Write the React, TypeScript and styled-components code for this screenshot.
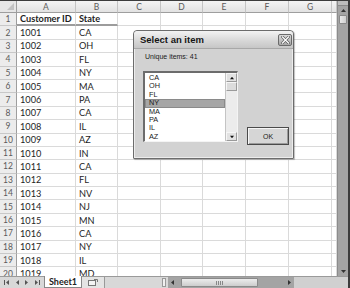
import React from "react";
import styled, { createGlobalStyle, css } from "styled-components";

const Global = createGlobalStyle`
  html, body { margin: 0; padding: 0; background: #fff; overflow: hidden; }
  #root { width: 350px; height: 288px; }
`;

const Window = styled.div`
  position: relative;
  width: 350px;
  height: 288px;
  box-sizing: border-box;
  border-top: 1px solid #3c3c3c;
  border-right: 2px solid #3c3c3c;
  display: flex;
  flex-direction: column;
  overflow: hidden;
  background: #fff;
`;

const Main = styled.div`
  flex: 1;
  display: flex;
  min-height: 0;
`;

const Sheet = styled.div`
  flex: 1;
  display: grid;
  grid-template-columns: 17px 59px 42px 43px 42px 43px 43px 43px 1fr;
  grid-template-rows: 12px repeat(20, 13.4px);
  overflow: hidden;
  font-family: Lato, "Liberation Sans", sans-serif;
`;

type CellKind = "corner" | "colhead" | "rowhead" | "cell";

const Cell = styled.div<{ $kind: CellKind; $bold?: boolean; $heading?: boolean }>`
  box-sizing: border-box;
  display: flex;
  align-items: center;
  overflow: hidden;
  white-space: nowrap;
  border-right: 1px solid #dadada;
  border-bottom: 1px solid #dadada;
  font-size: 9.2px;
  color: #1e1e1e;
  padding-left: 3px;
  ${(p) => p.$bold && css`font-weight: 700;`}
  ${(p) =>
    p.$heading &&
    css`
      border-bottom: 2px solid #9c9c9c;
    `}
  ${(p) =>
    p.$kind === "colhead" &&
    css`
      justify-content: center;
      padding-left: 0;
      background: linear-gradient(#f4f4f4, #e2e2e2);
      border-right: 1px solid #c4c4c4;
      border-bottom: 1px solid #9e9e9e;
      color: #5a5a5a;
      font-size: 8.5px;
    `}
  ${(p) =>
    p.$kind === "rowhead" &&
    css`
      justify-content: center;
      padding-left: 0;
      background: #ececec;
      border-right: 1px solid #9e9e9e;
      border-bottom: 1px solid #c8c8c8;
      color: #5a5a5a;
      font-size: 8.5px;
    `}
  ${(p) =>
    p.$kind === "corner" &&
    css`
      padding-left: 0;
      background: #e6e6e6;
      border-right: 1px solid #9e9e9e;
      border-bottom: 1px solid #9e9e9e;
      position: relative;
    `}
`;

const CornerMark = styled.span`
  position: absolute;
  right: 2px;
  bottom: 2px;
  width: 0;
  height: 0;
  border-left: 7px solid transparent;
  border-bottom: 7px solid #c2c2c2;
`;

const VScroll = styled.div`
  width: 10px;
  display: flex;
  flex-direction: column;
  background: #a4a4a4;
  border-left: 1px solid #8c8c8c;
`;

const VSplit = styled.div`
  height: 4px;
  background: #bdbdbd;
  border-bottom: 1px solid #8a8a8a;
`;

const ArrowBtn = styled.div`
  height: 9px;
  display: flex;
  align-items: center;
  justify-content: center;
`;

const VThumb = styled.div`
  height: 7px;
  margin: 0 1px;
  background: linear-gradient(90deg, #e9e9e9, #cfcfcf);
  border: 1px solid #8a8a8a;
  border-radius: 1px;
`;

const Fill = styled.div`
  flex: 1;
`;

const BottomBar = styled.div`
  height: 11px;
  display: flex;
  align-items: stretch;
  background: #d8d8d8;
  border-top: 1px solid #9a9a9a;
  font-family: Lato, "Liberation Sans", sans-serif;
`;

const NavArrows = styled.div`
  width: 44px;
  display: flex;
  align-items: center;
  justify-content: space-around;
  padding: 0 2px;
  box-sizing: border-box;
`;

const SheetTab = styled.div`
  width: 36px;
  display: flex;
  align-items: center;
  justify-content: center;
  background: #fff;
  font-weight: 700;
  font-size: 9px;
  line-height: 1;
  color: #222;
  border-left: 1px solid #888;
  border-right: 1px solid #888;
  border-bottom: 1px solid #888;
  margin-top: -1px;
`;

const InsertTab = styled.div`
  width: 22px;
  display: flex;
  align-items: center;
  justify-content: center;
  background: #e4e4e4;
  border-right: 1px solid #999;
`;

const HSplit = styled.div`
  width: 2px;
  margin: 1px 2px;
  background: #f0f0f0;
  border: 1px solid #999;
`;

const HScroll = styled.div`
  width: 126px;
  display: flex;
  align-items: stretch;
  background: #a4a4a4;
`;

const HArrow = styled.div`
  width: 9px;
  display: flex;
  align-items: center;
  justify-content: center;
`;

const HThumb = styled.div`
  width: 75px;
  margin: 1px 0 1px 4px;
  background: linear-gradient(#ececec, #cdcdcd);
  border: 1px solid #8a8a8a;
  border-radius: 1px;
  display: flex;
  align-items: center;
  justify-content: center;
  gap: 1px;
`;

const Grip = styled.span`
  width: 1px;
  height: 4px;
  background: #888;
`;

const Corner = styled.div`
  flex: 1;
  background: #d0d0d0;
`;

/* Dialog */

const Dialog = styled.div`
  position: absolute;
  left: 133px;
  top: 29px;
  width: 161px;
  height: 129px;
  box-sizing: border-box;
  border: 1px solid #6c6c6c;
  border-radius: 4px 4px 1px 1px;
  background: #d2d2d2;
  box-shadow: inset 0 0 0 1px #ececec, 1px 1px 1px rgba(0, 0, 0, 0.25);
  display: flex;
  flex-direction: column;
  font-family: "Liberation Sans", Arial, sans-serif;
  overflow: hidden;
`;

const TitleBar = styled.div`
  height: 17px;
  flex: none;
  display: flex;
  align-items: center;
  justify-content: space-between;
  padding: 0 1px 0 6px;
  background: linear-gradient(#f3f3f3, #d6d6d6 60%, #c6c6c6);
  border-bottom: 1px solid #a8a8a8;
  border-radius: 3px 3px 0 0;
`;

const Title = styled.span`
  font-weight: 700;
  font-size: 9.5px;
  color: #151515;
`;

const CloseBtn = styled.div`
  width: 14px;
  height: 12px;
  box-sizing: border-box;
  border: 1px solid #6a6a6a;
  border-radius: 2px;
  background: linear-gradient(#d8d8d8, #a8a8a8);
  display: flex;
  align-items: center;
  justify-content: center;
`;

const DialogBody = styled.div`
  display: grid;
  grid-template-columns: 95px 42px;
  grid-template-rows: 22px 71px;
  align-content: start;
  column-gap: 9px;
  padding: 0 0 0 9px;
  align-items: start;
`;

const Label = styled.div`
  grid-column: 1 / span 2;
  font-size: 7px;
  color: #1a1a1a;
  padding: 4px 0 0 2px;
`;

const ListBox = styled.div`
  height: 71px;
  box-sizing: border-box;
  display: flex;
  background: #fff;
  border-top: 2px solid #6c6c6c;
  border-left: 2px solid #6c6c6c;
  border-right: 1px solid #f4f4f4;
  border-bottom: 1px solid #f4f4f4;
`;

const Items = styled.div`
  flex: 1;
  padding-top: 1px;
  overflow: hidden;
`;

const Item = styled.div<{ $selected?: boolean }>`
  height: 8.4px;
  line-height: 8.4px;
  font-size: 7.3px;
  color: #1a1a1a;
  padding-left: 4px;
  ${(p) =>
    p.$selected &&
    css`
      background: #a6a6a6;
      box-shadow: inset 0 0 0 1px #8a8a8a;
    `}
`;

const ListScroll = styled.div`
  width: 11px;
  display: flex;
  flex-direction: column;
  background: #ececec;
  border-left: 1px solid #c4c4c4;
`;

const ListArrow = styled.div`
  height: 9px;
  box-sizing: border-box;
  display: flex;
  align-items: center;
  justify-content: center;
  background: #e2e2e2;
  border: 1px solid #9a9a9a;
  border-top-color: #f6f6f6;
  border-left-color: #f6f6f6;
`;

const ListThumb = styled.div`
  height: 9px;
  box-sizing: border-box;
  background: #dcdcdc;
  border: 1px solid #9a9a9a;
  border-top-color: #f6f6f6;
  border-left-color: #f6f6f6;
`;

const OkButton = styled.div`
  align-self: end;
  margin-bottom: -3px;
  height: 18px;
  box-sizing: border-box;
  display: flex;
  align-items: center;
  justify-content: center;
  background: #d6d6d6;
  border: 1px solid #4a4a4a;
  box-shadow: inset 1px 1px 0 #f6f6f6, inset -1px -1px 0 #9a9a9a;
  font-size: 7px;
  color: #1a1a1a;
`;

const Tri = ({ dir, color = "#222", size = 5 }: { dir: "up" | "down" | "left" | "right"; color?: string; size?: number }) => {
  const pts = {
    up: "0,4 5,4 2.5,1",
    down: "0,1 5,1 2.5,4",
    left: "4,0 4,5 1,2.5",
    right: "1,0 1,5 4,2.5",
  }[dir];
  return (
    <svg width={size} height={size} viewBox="0 0 5 5">
      <polygon points={pts} fill={color} />
    </svg>
  );
};

const EndArrow = ({ dir }: { dir: "left" | "right" }) => (
  <svg width="6" height="5" viewBox="0 0 6 5">
    {dir === "left" ? (
      <>
        <rect x="0" y="0" width="1" height="5" fill="#555" />
        <polygon points="5,0 5,5 2,2.5" fill="#555" />
      </>
    ) : (
      <>
        <polygon points="1,0 1,5 4,2.5" fill="#555" />
        <rect x="5" y="0" width="1" height="5" fill="#555" />
      </>
    )}
  </svg>
);

const columns = ["A", "B", "C", "D", "E", "F", "G", ""];

const data: [string, string][] = [
  ["Customer ID", "State"],
  ["1001", "CA"],
  ["1002", "OH"],
  ["1003", "FL"],
  ["1004", "NY"],
  ["1005", "MA"],
  ["1006", "PA"],
  ["1007", "CA"],
  ["1008", "IL"],
  ["1009", "AZ"],
  ["1010", "IN"],
  ["1011", "CA"],
  ["1012", "FL"],
  ["1013", "NV"],
  ["1014", "NJ"],
  ["1015", "MN"],
  ["1016", "CA"],
  ["1017", "NY"],
  ["1018", "IL"],
  ["1019", "MD"],
];

const listItems = ["CA", "OH", "FL", "NY", "MA", "PA", "IL", "AZ"];

export default function App() {
  return (
    <>
      <Global />
      <Window>
        <Main>
          <Sheet>
            <Cell $kind="corner">
              <CornerMark />
            </Cell>
            {columns.map((c, i) => (
              <Cell key={"h" + i} $kind="colhead">
                {c}
              </Cell>
            ))}
            {data.map((row, r) => (
              <React.Fragment key={r}>
                <Cell $kind="rowhead">{r + 1}</Cell>
                <Cell $kind="cell" $bold={r === 0} $heading={r === 0}>
                  {row[0]}
                </Cell>
                <Cell $kind="cell" $bold={r === 0} $heading={r === 0}>
                  {row[1]}
                </Cell>
                {[0, 1, 2, 3, 4, 5].map((k) => (
                  <Cell key={k} $kind="cell" />
                ))}
              </React.Fragment>
            ))}
          </Sheet>
          <VScroll>
            <VSplit />
            <ArrowBtn>
              <Tri dir="up" color="#333" />
            </ArrowBtn>
            <VThumb />
            <Fill />
            <ArrowBtn>
              <Tri dir="down" color="#333" />
            </ArrowBtn>
          </VScroll>
        </Main>
        <BottomBar>
          <NavArrows>
            <EndArrow dir="left" />
            <Tri dir="left" color="#555" />
            <Tri dir="right" color="#555" />
            <EndArrow dir="right" />
          </NavArrows>
          <SheetTab>Sheet1</SheetTab>
          <InsertTab>
            <svg width="10" height="7" viewBox="0 0 10 7">
              <rect x="0.5" y="1.5" width="7" height="5" fill="#f4f4f4" stroke="#777" />
              <path d="M6 0.5 L9.5 0.5 L9.5 3" fill="none" stroke="#777" />
            </svg>
          </InsertTab>
          <Fill />
          <HSplit />
          <HScroll>
            <HArrow>
              <Tri dir="left" color="#333" />
            </HArrow>
            <HThumb>
              <Grip />
              <Grip />
              <Grip />
              <Grip />
            </HThumb>
            <Fill />
            <HArrow>
              <Tri dir="right" color="#333" />
            </HArrow>
          </HScroll>
          <Corner />
        </BottomBar>
        <Dialog>
          <TitleBar>
            <Title>Select an item</Title>
            <CloseBtn>
              <svg width="9" height="8" viewBox="0 0 9 8">
                <path d="M1.5 1 L7.5 7 M7.5 1 L1.5 7" stroke="#555" strokeWidth="2.6" strokeLinecap="square" />
                <path d="M1.5 1 L7.5 7 M7.5 1 L1.5 7" stroke="#fff" strokeWidth="1.3" strokeLinecap="square" />
              </svg>
            </CloseBtn>
          </TitleBar>
          <DialogBody>
            <Label>Unique items: 41</Label>
            <ListBox>
              <Items>
                {listItems.map((it) => (
                  <Item key={it} $selected={it === "NY"}>
                    {it}
                  </Item>
                ))}
              </Items>
              <ListScroll>
                <ListArrow>
                  <Tri dir="up" size={4} color="#111" />
                </ListArrow>
                <ListThumb />
                <Fill />
                <ListArrow>
                  <Tri dir="down" size={4} color="#111" />
                </ListArrow>
              </ListScroll>
            </ListBox>
            <OkButton>OK</OkButton>
          </DialogBody>
        </Dialog>
      </Window>
    </>
  );
}
